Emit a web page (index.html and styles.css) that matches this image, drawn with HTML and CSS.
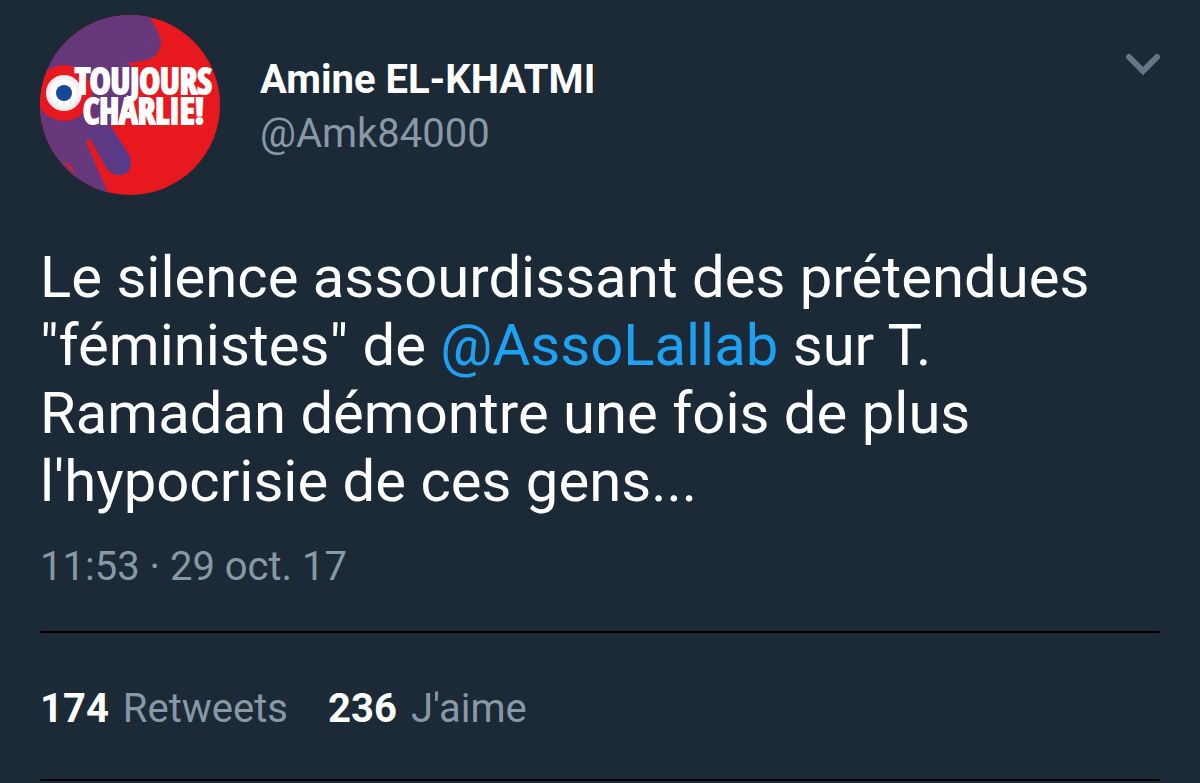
FILE: index.html
```html
<!DOCTYPE html>
<html lang="fr">
<head>
<meta charset="utf-8">
<meta name="viewport" content="width=device-width, initial-scale=1">
<title>Tweet</title>
<link rel="stylesheet" href="styles.css">
</head>
<body>
<article class="tweet">
  <header class="head">
    <svg class="avatar" viewBox="0 0 180 180" role="img" aria-label="Toujours Charlie!">
      <defs>
        <clipPath id="round"><circle cx="90" cy="90" r="90"/></clipPath>
        <pattern id="hatch" width="3" height="3" patternUnits="userSpaceOnUse" patternTransform="rotate(50)">
          <rect width="3" height="3" fill="#6b3a7d"/>
          <rect width="3" height="1" fill="#5c3478"/>
        </pattern>
        <linearGradient id="arm" x1="0" y1="0" x2="1" y2="0">
          <stop offset="0" stop-color="#533b8c" stop-opacity="0"/>
          <stop offset="1" stop-color="#533b8c"/>
        </linearGradient>
        <radialGradient id="disc">
          <stop offset="0.6" stop-color="#fff"/>
          <stop offset="1" stop-color="#e6e3e8"/>
        </radialGradient>
      </defs>
      <g clip-path="url(#round)">
        <rect width="180" height="180" fill="#e8191e"/>
        <path d="M0 0H108Q114 8 121 24Q122 31 116 40Q110 46 87 48Q97 54 100 66Q100 82 70 110L89 140Q94 155 84 159Q75 163 67 154L50 124L46 127L69 180H0Z" fill="url(#hatch)"/>
        <path d="M40 110H70L89 140Q94 155 84 159Q75 163 67 154L50 124Z" fill="url(#arm)"/>
        <path d="M22 146L30 150L36 160Z" fill="#e8191e"/>
        <circle cx="24" cy="78" r="28" fill="#e8191e"/>
        <circle cx="24" cy="78" r="18" fill="url(#disc)"/>
        <circle cx="24" cy="78" r="8" fill="#17479b"/>
        <text class="logo" x="35" y="79">TOUJOURS</text>
        <text class="logo" x="43" y="109">CHARLIE!</text>
      </g>
    </svg>
    <div class="names">
      <a class="name" href="#profile">Amine EL-KHATMI</a>
      <a class="handle" href="#profile">@Amk84000</a>
    </div>
    <button class="more" type="button" aria-label="Plus d'options">
      <svg class="chevron" viewBox="0 0 34 24"><path d="M3 4L17 18L31 4"/></svg>
    </button>
  </header>
  <p class="text">Le silence assourdissant des prétendues "féministes" de <a class="mention" href="#asso">@AssoLallab</a> sur T. Ramadan démontre une fois de plus l'hypocrisie de ces gens...</p>
  <time class="date" datetime="2017-10-29T11:53">11:53 · 29 oct. 17</time>
  <footer class="stats">
    <a class="stat" href="#retweets"><strong class="count">174</strong><span>Retweets</span></a>
    <a class="stat" href="#likes"><strong class="count">236</strong><span>J'aime</span></a>
  </footer>
</article>
</body>
</html>
```

FILE: styles.css
```css
body {
  margin: 0;
  background: #1c2936;
  color: #fff;
  font-family: Roboto, "Liberation Sans", sans-serif;
}
a { color: inherit; text-decoration: none; }
.tweet { padding: 15px 40px 0; }
.head { display: flex; align-items: flex-start; gap: 40px; }
.avatar { width: 180px; height: 180px; flex: none; }
.logo {
  fill: #fff;
  stroke: #fff;
  stroke-width: 2px;
  font-family: "Open Sans Condensed", "Roboto Condensed", Roboto, sans-serif;
  font-size: 35px;
  font-weight: 800;
}
.names { flex: 1; display: flex; flex-direction: column; padding-top: 38px; }
.name { font-size: 40px; line-height: 54px; font-weight: 700; }
.handle { font-size: 40px; line-height: 54px; color: #8899a6; }
.more { margin-top: 38px; padding: 0; border: 0; background: none; }
.chevron { display: block; width: 34px; height: 24px; }
.chevron path { fill: none; stroke: #657786; stroke-width: 6; stroke-linecap: round; }
.text { margin: 48px 0 0; font-size: 58px; line-height: 68px; }
.mention { color: #1da1f2; }
.date { display: block; margin-top: 28px; font-size: 40px; line-height: 48px; color: #8899a6; }
.stats {
  display: flex;
  gap: 40px;
  margin-top: 40px;
  padding: 52px 0 46px;
  border-top: 2px solid #000;
  border-bottom: 2px solid #000;
  font-size: 40px;
  line-height: 48px;
}
.stat { display: flex; gap: 14px; color: #8899a6; }
.count { color: #fff; font-weight: 700; }
```
